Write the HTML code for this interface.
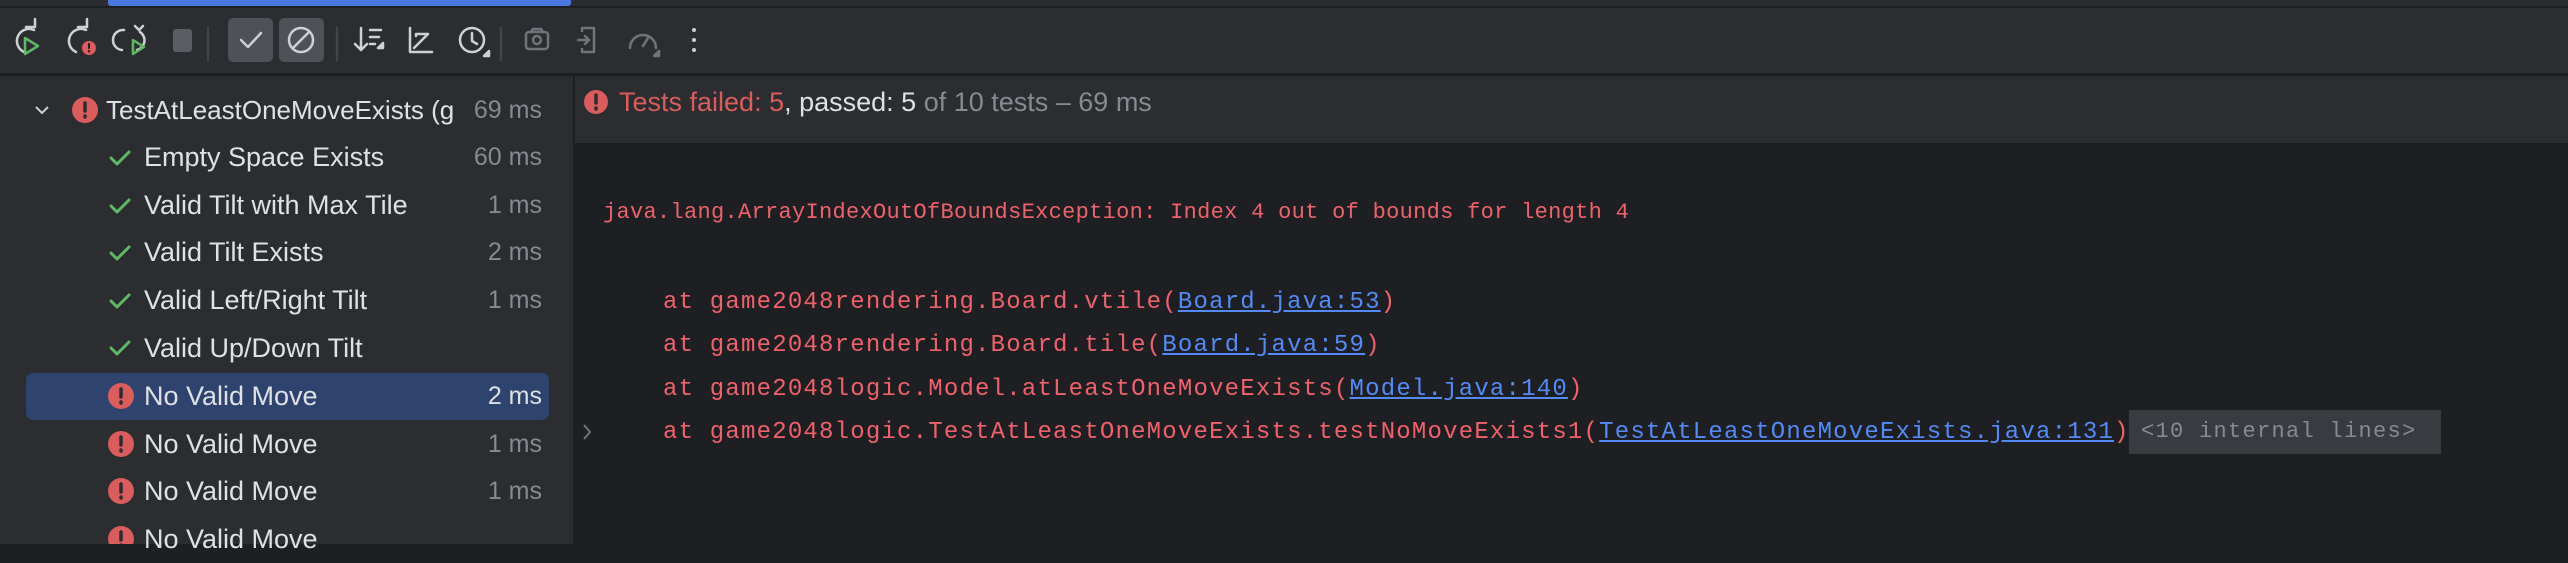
<!DOCTYPE html>
<html><head><meta charset="utf-8"><style>
*{margin:0;padding:0;box-sizing:border-box}
body{width:2568px;height:544px;background:#1e1f22;position:relative;overflow:hidden;font-family:"Liberation Sans",sans-serif}
.a{position:absolute;white-space:nowrap}
.t{font-size:27px;color:#dfe1e5;line-height:48px}
.h{font-size:26px}
.ms{font-size:25px;color:#868a91;line-height:48px;text-align:right;width:120px;left:422px}
.m{font-family:"Liberation Mono",monospace;font-size:24px;letter-spacing:1.2px;color:#f0616b;line-height:48px}
.lk{color:#548af7;text-decoration:underline}
svg{position:absolute}
</style></head><body>
<div class="a" style="left:0;top:0;width:2568px;height:74px;background:#2b2d30"></div>
<div class="a" style="left:0;top:6px;width:2568px;height:2px;background:#1e1f22"></div>
<div class="a" style="left:108px;top:0;width:463px;height:6px;background:#4a77e0;border-radius:0 0 3px 3px"></div>
<div class="a" style="left:0;top:73px;width:2568px;height:3px;background:#1e1f22"></div>
<svg style="left:0;top:8px" width="720" height="66" viewBox="0 8 720 66" fill="none" stroke="#ced0d6" stroke-width="2.5" stroke-linecap="round" stroke-linejoin="round">
<path d="M34 30 A12 12 0 1 0 24 52"/><path d="M26 27h9v-8"/><path d="M25 38l13 8-13 8z" stroke="#5fb865"/>
<path d="M86 30 A12 12 0 1 0 76 52"/><path d="M78 27h9v-8"/><circle cx="89" cy="48" r="7" fill="#db5c5c" stroke="none"/><path d="M89 44v4M89 51v.5" stroke="#1e1f22" stroke-width="2"/>
<path d="M124 30 A10 10 0 0 0 122 50"/><path d="M137 50 A10 10 0 0 0 140 32"/><path d="M135 26l4 4 4-4"/><path d="M133 40l11 7-11 7z" stroke="#5fb865"/>
<rect x="173" y="29" width="19" height="23" rx="3" fill="#5a5d63" stroke="none"/>
<path d="M208 28v32" stroke="#43454a"/>
<rect x="228" y="18" width="45" height="44" rx="5" fill="#4e5157" stroke="none"/>
<path d="M241 40l7 7 13-14"/>
<rect x="279" y="18" width="45" height="44" rx="5" fill="#4e5157" stroke="none"/>
<circle cx="301" cy="40" r="12"/><path d="M293 48l16-16"/>
<path d="M337 28v32" stroke="#43454a"/>
<path d="M361 28v22M355 44l6 6 6-6M370 30h11M370 37h9M370 44h5"/><path d="M378 48l5 0 0-5z" fill="#ced0d6"/>
<path d="M410 28v24h22M414 48l14-14M416 36v-2h12"/>
<circle cx="472" cy="40" r="12"/><path d="M472 33v8l5 3"/><path d="M484 56h5v-5z" fill="#ced0d6"/>
<path d="M501 28v32" stroke="#43454a"/>
<g stroke="#6f737a"><rect x="526" y="32" width="22" height="17" rx="3"/><circle cx="537" cy="40" r="4"/><path d="M531 32l2-3h8l2 3"/>
<path d="M582 31v-3h12v24h-12v-3M578 40h11M585 36l4 4-4 4"/>
<path d="M630 48a13 13 0 1 1 26 0"/><path d="M643 46l5-8"/><path d="M654 56h5v-5z" fill="#6f737a"/></g>
<circle cx="694" cy="30" r="2" fill="#ced0d6" stroke="none"/><circle cx="694" cy="40" r="2" fill="#ced0d6" stroke="none"/><circle cx="694" cy="50" r="2" fill="#ced0d6" stroke="none"/>
</svg>
<div class="a" style="left:0;top:76px;width:573px;height:468px;background:#2b2d30"></div>
<div class="a" style="left:573px;top:76px;width:2px;height:468px;background:#1e1f22"></div>
<div class="a" style="left:26px;top:373px;width:523px;height:47px;background:#2e436e;border-radius:7px"></div>
<svg style="left:0;top:76px" width="573" height="468" fill="none">
<path d="M36 31l6 6 6-6" stroke="#ced0d6" stroke-width="2"/>
<circle cx="85" cy="34" r="13" fill="#db5c5c"/><path d="M85 27v8M85 40v1" stroke="#2b2d30" stroke-width="3.5" stroke-linecap="round"/>
<g stroke="#5fb865" stroke-width="3" stroke-linecap="round" stroke-linejoin="round">
<path d="M111 82l6 6 12-12"/><path d="M111 130l6 6 12-12"/><path d="M111 177l6 6 12-12"/><path d="M111 225l6 6 12-12"/><path d="M111 272l6 6 12-12"/></g>
<g fill="#db5c5c"><circle cx="121" cy="320" r="13"/><circle cx="121" cy="368" r="13"/><circle cx="121" cy="415" r="13"/><circle cx="121" cy="463" r="13"/></g>
<g stroke="#2b2d30" stroke-width="3.5" stroke-linecap="round"><path d="M121 313v8M121 326v1M121 361v8M121 374v1M121 408v8M121 421v1M121 456v8M121 469v1" /></g>
</svg>
<div class="a t h" style="left:106px;top:86px;width:364px;overflow:hidden">TestAtLeastOneMoveExists (g</div>
<div class="a ms" style="top:86px">69 ms</div>
<div class="a t" style="left:144px;top:133px">Empty Space Exists</div><div class="a ms" style="top:133px">60 ms</div>
<div class="a t" style="left:144px;top:181px">Valid Tilt with Max Tile</div><div class="a ms" style="top:181px">1 ms</div>
<div class="a t" style="left:144px;top:228px">Valid Tilt Exists</div><div class="a ms" style="top:228px">2 ms</div>
<div class="a t" style="left:144px;top:276px">Valid Left/Right Tilt</div><div class="a ms" style="top:276px">1 ms</div>
<div class="a t" style="left:144px;top:324px">Valid Up/Down Tilt</div>
<div class="a t" style="left:144px;top:372px">No Valid Move</div><div class="a ms" style="top:372px;color:#dfe1e5">2 ms</div>
<div class="a t" style="left:144px;top:420px">No Valid Move</div><div class="a ms" style="top:420px">1 ms</div>
<div class="a t" style="left:144px;top:467px">No Valid Move</div><div class="a ms" style="top:467px">1 ms</div>
<div class="a t" style="left:144px;top:515px">No Valid Move</div>
<div class="a" style="left:575px;top:76px;width:1993px;height:67px;background:#2b2d30"></div>
<svg style="left:583px;top:89px" width="28" height="28"><circle cx="13" cy="13" r="12" fill="#db5c5c"/><path d="M13 6v8M13 19v1" stroke="#2b2d30" stroke-width="3.5" stroke-linecap="round"/></svg>
<div class="a" style="left:619px;top:86px;font-size:27px;line-height:32px;color:#db5c5c">Tests failed: 5<span style="color:#dfe1e5">, passed: 5</span><span style="color:#868a91"> of 10 tests – 69 ms</span></div>
<div class="a m" style="left:603px;top:189px;font-size:22px;letter-spacing:0.3px">java.lang.ArrayIndexOutOfBoundsException: Index 4 out of bounds for length 4</div>
<div class="a m" style="left:663px;top:279px">at game2048rendering.Board.vtile(<span class="lk">Board.java:53</span>)</div>
<div class="a m" style="left:663px;top:322px">at game2048rendering.Board.tile(<span class="lk">Board.java:59</span>)</div>
<div class="a m" style="left:663px;top:366px">at game2048logic.Model.atLeastOneMoveExists(<span class="lk">Model.java:140</span>)</div>
<div class="a m" style="left:663px;top:409px">at game2048logic.TestAtLeastOneMoveExists.testNoMoveExists1(<span class="lk">TestAtLeastOneMoveExists.java:131</span>)</div>
<div class="a m" style="left:2129px;top:410px;width:312px;height:44px;line-height:44px;background:#393b40;color:#868a91;padding-left:12px;font-size:22px;letter-spacing:1.3px">&lt;10 internal lines&gt;</div>
<svg style="left:580px;top:422px" width="14" height="20"><path d="M4 3l6 7-6 7" stroke="#6f737a" stroke-width="2" fill="none"/></svg>
</body></html>
